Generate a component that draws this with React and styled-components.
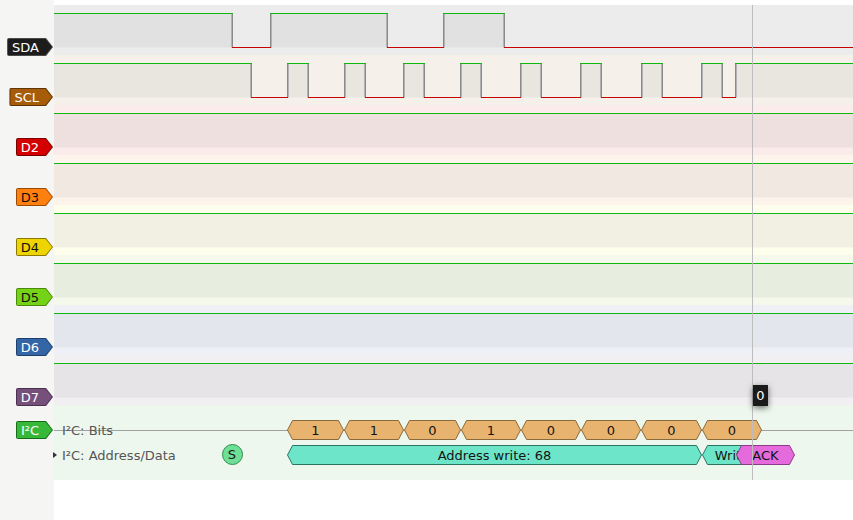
import React from "react";
import styled, { createGlobalStyle } from "styled-components";

const X0 = 54;
const TRACE_W = 799;

const GlobalStyle = createGlobalStyle`
  body {
    margin: 0;
    background: #ffffff;
    font-family: "DejaVu Sans", "Liberation Sans", sans-serif;
  }
`;

const channels = [
  { name: "SDA", bg: "#ececec", fill: "#e1e1e1", flag: "#1c1c1c", border: "#4a4a4a", text: "#ffffff", edges: [232, 270, 387, 443, 504] },
  {
    name: "SCL", bg: "#f5f1ea", fill: "#e9e6df", flag: "#a65c08", border: "#5e3400", text: "#ffffff",
    edges: [251, 287, 308, 344, 365, 403, 424, 460, 481, 520, 541, 580, 601, 641, 662, 701, 722, 735],
  },
  { name: "D2", bg: "#fbeceb", fill: "#ede0df", flag: "#d40000", border: "#7a0000", text: "#ffffff", edges: [] },
  { name: "D3", bg: "#fdf5ec", fill: "#f1e9e1", flag: "#ff7f0f", border: "#9a4b00", text: "#111111", edges: [] },
  { name: "D4", bg: "#fefeec", fill: "#f2f0e3", flag: "#eed400", border: "#8a7a00", text: "#111111", edges: [] },
  { name: "D5", bg: "#f4f9ec", fill: "#e7eee0", flag: "#74d317", border: "#4a8a06", text: "#111111", edges: [] },
  { name: "D6", bg: "#eff0f5", fill: "#e3e6ec", flag: "#3465a4", border: "#1d3f70", text: "#ffffff", edges: [] },
  { name: "D7", bg: "#f1eff2", fill: "#e7e4e8", flag: "#75507b", border: "#4a2f50", text: "#ffffff", edges: [] },
];

const bits = [
  [287, 344, "1"], [344, 404, "1"], [404, 461, "0"], [461, 521, "1"],
  [521, 581, "0"], [581, 641, "0"], [641, 702, "0"], [702, 762, "0"],
];

const Page = styled.div`
  position: relative;
  width: 853px;
  height: 520px;
  display: flex;
  flex-direction: column;
  overflow: hidden;
`;

const Row = styled.div`
  display: grid;
  grid-template-columns: 54px 1fr;
  height: ${(p) => p.$h}px;
  flex: ${(p) => (p.$grow ? 1 : "none")};
`;

const Header = styled.div`
  background: #f5f5f3;
  display: flex;
  justify-content: flex-end;
  align-items: flex-start;
  padding-top: ${(p) => p.$top || 0}px;
  padding-right: 1px;
`;

const Trace = styled.div`
  position: relative;
  background: ${(p) => p.$bg || "#ffffff"};

  svg {
    display: block;
  }
`;

const Flag = styled.div`
  position: relative;
  display: inline-flex;
  align-items: center;
  height: 18px;
  padding: 0 14px 0 5px;
  font-size: 13px;
  color: ${(p) => p.$text};
  background: ${(p) => p.$border};
  border-radius: 2px 0 0 2px;
  clip-path: polygon(0 0, calc(100% - 7px) 0, 100% 50%, calc(100% - 7px) 100%, 0 100%);

  &::before {
    content: "";
    position: absolute;
    inset: 1px;
    background: ${(p) => p.$fill};
    clip-path: polygon(0 0, calc(100% - 6.5px) 0, 100% 50%, calc(100% - 6.5px) 100%, 0 100%);
  }

  span {
    position: relative;
  }
`;

const DecoderTrace = styled(Trace)`
  display: flex;
  flex-direction: column;
  gap: 5px;
  padding-top: 15px;
`;

const Lane = styled.div`
  position: relative;
  height: 20px;
  display: flex;
  align-items: center;
  padding-left: ${(p) => (p.$line ? 8 : 0)}px;

  &::before {
    content: "";
    display: ${(p) => (p.$line ? "block" : "none")};
    position: absolute;
    left: 0;
    right: 0;
    top: 10px;
    height: 1px;
    background: #a0a0a0;
  }
`;

const LaneTitle = styled.span`
  position: relative;
  font-size: 13px;
  color: #555555;
  white-space: nowrap;
`;

const Arrow = styled.span`
  width: 0;
  height: 0;
  border-left: 4px solid #333333;
  border-top: 3.5px solid transparent;
  border-bottom: 3.5px solid transparent;
  margin: 0 5px 0 -1px;
`;

const AnnotBox = styled.div`
  position: absolute;
  top: 0;
  height: 20px;
  display: flex;
  align-items: center;
  justify-content: center;

  svg {
    position: absolute;
    inset: 0;
  }
`;

const AnnotLabel = styled.span`
  position: relative;
  font-size: 13px;
  color: #141414;
  white-space: nowrap;
`;

const StartMark = styled.div`
  position: absolute;
  left: ${(p) => p.$x - X0 - 10.5}px;
  top: -1px;
  width: 21px;
  height: 21px;
  box-sizing: border-box;
  border-radius: 50%;
  background: #6ee096;
  border: 1px solid #2f8a4e;
  display: flex;
  align-items: center;
  justify-content: center;
  font-size: 13px;
  color: #1a1a1a;
`;

const Cursor = styled.div`
  position: absolute;
  left: 752px;
  top: 5px;
  width: 1px;
  height: 475px;
  background: #bdbdbd;
`;

const Tip = styled.div`
  position: absolute;
  left: 753px;
  top: 385px;
  width: 15px;
  height: 21px;
  background: #1a1a1a;
  color: #ffffff;
  font-size: 13px;
  display: flex;
  align-items: center;
  justify-content: center;
  box-shadow: 0 2px 6px rgba(0, 0, 0, 0.55);
`;

const Wave = ({ edges, fill }) => {
  const xs = [0, ...edges.map((e) => e - X0), TRACE_W];
  const segs = [];
  let level = 1;
  for (let i = 0; i < xs.length - 1; i++) {
    segs.push({ a: xs[i], b: xs[i + 1], level });
    level = 1 - level;
  }
  return (
    <svg width={TRACE_W} height={50}>
      {segs
        .filter((s) => s.level)
        .map((s, i) => (
          <rect key={"f" + i} x={s.a} y={8.5} width={s.b - s.a} height={34} fill={fill} />
        ))}
      {edges.map((e, i) => {
        const x = e - X0;
        const falling = i % 2 === 0;
        const lx = falling ? x - 1 : x + 1;
        return (
          <g key={"e" + i}>
            <line x1={lx + 0.5} x2={lx + 0.5} y1={8.5} y2={42.5} stroke="#b2b2b2" />
            <line x1={x + 0.5} x2={x + 0.5} y1={8.5} y2={42.5} stroke="#8a8a8a" />
          </g>
        );
      })}
      {segs.map((s, i) => (
        <line
          key={"l" + i}
          x1={s.a}
          x2={s.b + (s.b < TRACE_W ? 1 : 0)}
          y1={s.level ? 8.5 : 42.5}
          y2={s.level ? 8.5 : 42.5}
          stroke={s.level ? "#0fb80f" : "#c80000"}
        />
      ))}
    </svg>
  );
};

const Annot = ({ x1, x2, fill, stroke, children }) => {
  const w = x2 - x1;
  return (
    <AnnotBox style={{ left: x1 - X0, width: w }}>
      <svg width={w} height={20}>
        <polygon
          points={`0.5,10 5.5,0.5 ${w - 5.5},0.5 ${w - 0.5},10 ${w - 5.5},19.5 5.5,19.5`}
          fill={fill}
          stroke={stroke}
        />
      </svg>
      <AnnotLabel>{children}</AnnotLabel>
    </AnnotBox>
  );
};

export default function App() {
  return (
    <>
      <GlobalStyle />
      <Page>
        <Row $h={5}>
          <Header />
          <Trace />
        </Row>

        {channels.map((c) => (
          <Row key={c.name} $h={50}>
            <Header $top={33}>
              <Flag $fill={c.flag} $border={c.border} $text={c.text}>
                <span>{c.name}</span>
              </Flag>
            </Header>
            <Trace $bg={c.bg}>
              <Wave edges={c.edges} fill={c.fill} />
            </Trace>
          </Row>
        ))}

        <Row $h={75}>
          <Header $top={16}>
            <Flag $fill="#38b838" $border="#176d17" $text="#ffffff">
              <span>I²C</span>
            </Flag>
          </Header>
          <DecoderTrace $bg="#eef7ee">
            <Lane $line>
              <LaneTitle>I²C: Bits</LaneTitle>
              {bits.map(([a, b, v], i) => (
                <Annot key={i} x1={a} x2={b} fill="#e8b36e" stroke="#8b6a3c">
                  {v}
                </Annot>
              ))}
            </Lane>
            <Lane>
              <Arrow />
              <LaneTitle>I²C: Address/Data</LaneTitle>
              <StartMark $x={232}>S</StartMark>
              <Annot x1={287} x2={702} fill="#6de5c8" stroke="#2d7563">
                Address write: 68
              </Annot>
              <Annot x1={702} x2={762} fill="#6de5c8" stroke="#2d7563">
                Write
              </Annot>
              <Annot x1={736} x2={795} fill="#e56bdc" stroke="#8c3b88">
                ACK
              </Annot>
            </Lane>
          </DecoderTrace>
        </Row>

        <Row $grow>
          <Header />
          <Trace />
        </Row>

        <Cursor />
        <Tip>0</Tip>
      </Page>
    </>
  );
}
